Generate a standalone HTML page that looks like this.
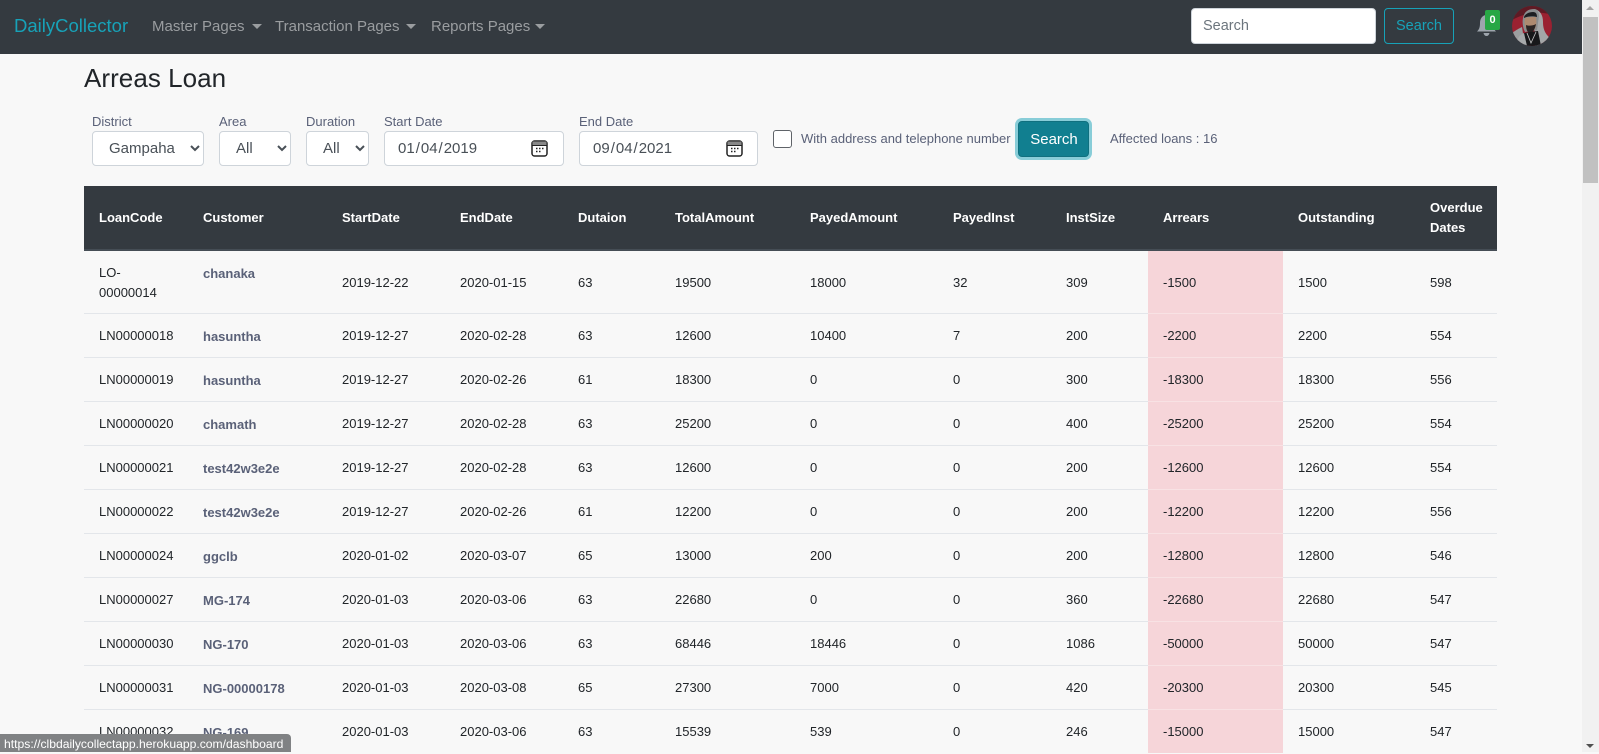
<!DOCTYPE html>
<html lang="en"><head><meta charset="utf-8"><title>Arreas Loan</title>
<style>
*{box-sizing:border-box}
html,body{margin:0;padding:0;width:1599px;height:752px;overflow:hidden;background:#f8f8f8;font-family:"Liberation Sans",sans-serif;color:#212529}
.abs,nav a,nav span,label{position:absolute}
nav{position:absolute;left:0;top:0;width:1582px;height:54px;background:#343a40}
nav a{top:17px;font-size:15px;line-height:19px;color:#9a9da0;text-decoration:none;white-space:nowrap}
nav a.brand{left:14px;top:15px;font-size:18.5px;line-height:22px;color:#17a2b8}
.caret{position:absolute;top:24px;width:0;height:0;border-left:5px solid transparent;border-right:5px solid transparent;border-top:5px solid #9a9da0}
#q{position:absolute;left:1191px;top:8px;width:185px;height:36px;border:1px solid #ced4da;border-radius:4px;background:#fff;font:14.5px "Liberation Sans",sans-serif;padding:0 11px;color:#6c757d}
#q::placeholder{color:#6c757d;opacity:1}
#sb{position:absolute;left:1384px;top:8px;width:70px;height:36px;border:1px solid #17a2b8;border-radius:4px;background:transparent;color:#17a2b8;font:14.5px "Liberation Sans",sans-serif;padding:0}
h1{position:absolute;left:84px;top:62px;margin:0;font-size:26px;line-height:32px;font-weight:400;color:#212529;letter-spacing:.05px}
label{font-size:13px;line-height:16px;top:114px;color:#5a6178;white-space:nowrap}
select{position:absolute;top:131px;height:35px;border:1px solid #ced4da;border-radius:4px;background:#fff;color:#495057;font:15px "Liberation Sans",sans-serif;padding:0 12px}
input[type=date]{position:absolute;top:131px;height:35px;border:1px solid #ced4da;border-radius:4px;background:#fff;color:#495057;font:15px "Liberation Sans",sans-serif;padding:0 12px}
input[type=date]::-webkit-calendar-picker-indicator{opacity:0}
#cb{position:absolute;left:773px;top:130px;width:19px;height:18px;border:1px solid #5f6368;border-radius:3px;background:#fff;margin:0;appearance:none}
#go{position:absolute;left:1018px;top:121px;width:71px;height:36px;background:#117f90;color:#fff;border:1px solid #10707f;border-radius:4px;box-shadow:0 0 0 3px rgba(23,162,184,.5);font:15px "Liberation Sans",sans-serif;padding:0 0 0 1px}
table{position:absolute;left:84px;top:186px;width:1413px;table-layout:fixed;border-collapse:separate;border-spacing:0;font-size:13px;line-height:19.5px}
th,td{padding:0 15px;text-align:left;vertical-align:middle}
thead th{height:65px;background:#343a40;color:#fff;font-weight:700;border-bottom:2px solid #454d55}
tbody td,tbody th{height:44px;border-top:1px solid #e3e6ea;color:#212529;font-weight:400}
tbody tr:first-child td,tbody tr:first-child th{height:62px;border-top:0;padding-top:1px}
tbody th{color:#5a6178;font-weight:700;padding-top:2px}
tbody tr:first-child th{vertical-align:top;padding-top:13px;color:#5a6178;font-weight:700}
td.r{background:#f6d5d9;border-top-color:#f8e2e4}
#track{position:absolute;left:1582px;top:0;width:17px;height:752px;background:#f1f1f1}
#thumb{position:absolute;left:1583px;top:17px;width:15px;height:166px;background:#c1c1c1}
.up{position:absolute;left:1586px;top:6px;width:0;height:0;border-left:4px solid transparent;border-right:4px solid transparent;border-bottom:4px solid #a3a3a3}
.dn{position:absolute;left:1586px;top:744px;width:0;height:0;border-left:4px solid transparent;border-right:4px solid transparent;border-top:4px solid #505050}
#status{position:absolute;left:0;top:734px;width:291px;height:18px;background:#808284;border-top-right-radius:4px;color:#fff;font-size:12.15px;line-height:20px;padding-left:4px;white-space:nowrap}
</style></head><body>
<nav>
<a class="brand" href="#">DailyCollector</a>
<a href="#" style="left:152px">Master Pages</a><i class="caret" style="left:252px"></i>
<a href="#" style="left:275px">Transaction Pages</a><i class="caret" style="left:406px"></i>
<a href="#" style="left:431px">Reports Pages</a><i class="caret" style="left:535px"></i>
</nav>
<input id="q" placeholder="Search">
<button id="sb">Search</button>
<svg class="abs" style="left:1475px;top:11px" width="24" height="26" viewBox="0 0 24 26"><path d="M2 20.5c2-2 3-4 3-8.500C5 7.500 7.500 4 11.500 4S18 7.500 18 12c0 4.500 1 6.500 3 8.500z" fill="#9ea5ad"/><path d="M8.500 22h6c-.5 2-1.500 3-3 3s-2.500-1-3-3z" fill="#9ea5ad"/></svg>
<div class="abs" style="left:1485px;top:10px;width:15px;height:20px;background:#28a745;border-radius:2px;color:#fff;font-size:11px;font-weight:700;text-align:center;line-height:20px">0</div>
<svg class="abs" style="left:1512px;top:6px" width="40" height="40" viewBox="0 0 40 40"><defs><clipPath id="c"><circle cx="20" cy="20" r="20"/></clipPath></defs><g clip-path="url(#c)"><rect width="40" height="40" fill="#9a2131"/><path d="M0 0h40v9C30 5 14 6 0 14z" fill="#5e1a24"/><path d="M0 40V27c4-3 8-5 10-6l3 19z" fill="#9b9e9f"/><path d="M22 3c6 1 9 6 9 13 0 5 1 9 4 13 3 3 4 7 4 11H23z" fill="#a3a6a7"/><path d="M11 12c1-6 5-9 11-9 3 0 5 3 5 7l-2 14-12 2c-2-4-3-9-2-14z" fill="#8a8d8e"/><path d="M12 11c1-3 5-5 9-5 3 0 4 2 4 5 -4-1-9-1-13 1z" fill="#1d1f22"/><path d="M13 12c3-1 8-1 11-1 1 6 0 11-2 13-2 2-6 2-7 0-2-3-3-7-2-12z" fill="#ad8a70"/><path d="M14 19c2 1 7 1 10-1-1 5-3 9-6 9-2 0-4-3-4-8z" fill="#2a2423"/><path d="M12 27l6-1 8-1 3 15H12z" fill="#17181a"/><path d="M15 27l4 10 5-11" fill="none" stroke="#c9c9c9" stroke-width=".8"/><path d="M4 40c0-6 3-11 8-13l3 13z" fill="#a7aaab"/></g></svg>

<h1>Arreas Loan</h1>
<label style="left:92px">District</label>
<select style="left:92px;width:112px"><option>Gampaha</option></select>
<label style="left:219px">Area</label>
<select style="left:219px;width:72px"><option>All</option></select>
<label style="left:306px">Duration</label>
<select style="left:306px;width:63px"><option>All</option></select>
<label style="left:384px">Start Date</label>
<input type="date" value="2019-01-04" style="left:384px;width:180px">
<svg class="abs" style="left:531px;top:140px;pointer-events:none" width="17" height="17" viewBox="0 0 17 17"><rect x="1" y="1" width="15" height="15" rx="2.5" fill="#fff" stroke="#222" stroke-width="1.500"/><rect x="1.500" y="1.500" width="14" height="3.500" fill="#888"/><path d="M1 5.500h15" stroke="#222" stroke-width="1"/><path d="M5 8.500h1.500M8 8.500h1.500M11 8.500h1.500M5 11.500h1.500M8 11.500h1.500" stroke="#222" stroke-width="1.500"/></svg>
<label style="left:579px">End Date</label>
<input type="date" value="2021-09-04" style="left:579px;width:179px">
<svg class="abs" style="left:726px;top:140px;pointer-events:none" width="17" height="17" viewBox="0 0 17 17"><rect x="1" y="1" width="15" height="15" rx="2.5" fill="#fff" stroke="#222" stroke-width="1.500"/><rect x="1.500" y="1.500" width="14" height="3.500" fill="#888"/><path d="M1 5.500h15" stroke="#222" stroke-width="1"/><path d="M5 8.500h1.500M8 8.500h1.500M11 8.500h1.500M5 11.500h1.500M8 11.500h1.500" stroke="#222" stroke-width="1.500"/></svg>
<input type="checkbox" id="cb">
<label style="left:801px;top:131px">With address and telephone number</label>
<button id="go">Search</button>
<label style="left:1110px;top:131px">Affected loans : 16</label>

<table>
<colgroup><col style="width:104px"><col style="width:139px"><col style="width:118px"><col style="width:118px"><col style="width:97px"><col style="width:135px"><col style="width:143px"><col style="width:113px"><col style="width:97px"><col style="width:135px"><col style="width:132px"><col style="width:82px"></colgroup>
<thead><tr><th>LoanCode</th><th>Customer</th><th>StartDate</th><th>EndDate</th><th>Dutaion</th><th>TotalAmount</th><th>PayedAmount</th><th>PayedInst</th><th>InstSize</th><th>Arrears</th><th>Outstanding</th><th>Overdue Dates</th></tr></thead>
<tbody>
<tr><td>LO-00000014</td><th>chanaka</th><td>2019-12-22</td><td>2020-01-15</td><td>63</td><td>19500</td><td>18000</td><td>32</td><td>309</td><td class="r">-1500</td><td>1500</td><td>598</td></tr>
<tr><td>LN00000018</td><th>hasuntha</th><td>2019-12-27</td><td>2020-02-28</td><td>63</td><td>12600</td><td>10400</td><td>7</td><td>200</td><td class="r">-2200</td><td>2200</td><td>554</td></tr>
<tr><td>LN00000019</td><th>hasuntha</th><td>2019-12-27</td><td>2020-02-26</td><td>61</td><td>18300</td><td>0</td><td>0</td><td>300</td><td class="r">-18300</td><td>18300</td><td>556</td></tr>
<tr><td>LN00000020</td><th>chamath</th><td>2019-12-27</td><td>2020-02-28</td><td>63</td><td>25200</td><td>0</td><td>0</td><td>400</td><td class="r">-25200</td><td>25200</td><td>554</td></tr>
<tr><td>LN00000021</td><th>test42w3e2e</th><td>2019-12-27</td><td>2020-02-28</td><td>63</td><td>12600</td><td>0</td><td>0</td><td>200</td><td class="r">-12600</td><td>12600</td><td>554</td></tr>
<tr><td>LN00000022</td><th>test42w3e2e</th><td>2019-12-27</td><td>2020-02-26</td><td>61</td><td>12200</td><td>0</td><td>0</td><td>200</td><td class="r">-12200</td><td>12200</td><td>556</td></tr>
<tr><td>LN00000024</td><th>ggclb</th><td>2020-01-02</td><td>2020-03-07</td><td>65</td><td>13000</td><td>200</td><td>0</td><td>200</td><td class="r">-12800</td><td>12800</td><td>546</td></tr>
<tr><td>LN00000027</td><th>MG-174</th><td>2020-01-03</td><td>2020-03-06</td><td>63</td><td>22680</td><td>0</td><td>0</td><td>360</td><td class="r">-22680</td><td>22680</td><td>547</td></tr>
<tr><td>LN00000030</td><th>NG-170</th><td>2020-01-03</td><td>2020-03-06</td><td>63</td><td>68446</td><td>18446</td><td>0</td><td>1086</td><td class="r">-50000</td><td>50000</td><td>547</td></tr>
<tr><td>LN00000031</td><th>NG-00000178</th><td>2020-01-03</td><td>2020-03-08</td><td>65</td><td>27300</td><td>7000</td><td>0</td><td>420</td><td class="r">-20300</td><td>20300</td><td>545</td></tr>
<tr><td>LN00000032</td><th>NG-169</th><td>2020-01-03</td><td>2020-03-06</td><td>63</td><td>15539</td><td>539</td><td>0</td><td>246</td><td class="r">-15000</td><td>15000</td><td>547</td></tr>
</tbody></table>

<div id="track"></div><div id="thumb"></div><i class="up"></i><i class="dn"></i>
<div id="status">https://clbdailycollectapp.herokuapp.com/dashboard</div>
</body></html>
